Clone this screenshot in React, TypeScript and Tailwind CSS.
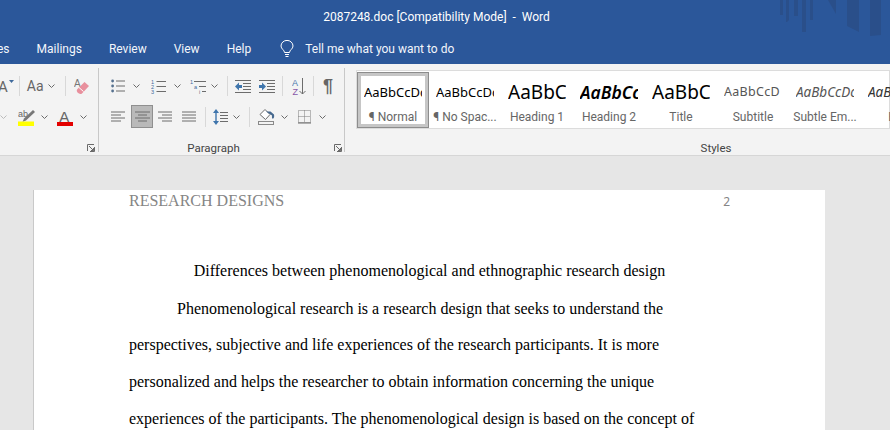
import React from 'react';

const Chevron = ({ className = '' }: { className?: string }) => (
  <svg width="7" height="4" viewBox="0 0 7 4" className={className} fill="none" stroke="#6a6a6a">
    <polyline points="0.5,0.5 3.5,3.5 6.5,0.5" />
  </svg>
);

const Separator = ({ className = '' }: { className?: string }) => (
  <div className={`w-px h-[20px] bg-[#d8d8d8] ${className}`} />
);

const Launcher = ({ className = '' }: { className?: string }) => (
  <svg width="8" height="8" viewBox="0 0 8 8" className={`absolute bottom-0 ${className}`} fill="none" stroke="#6a6a6a">
    <path d="M7.5 3V7.5H3M0.5 7V0.5H7M2 2L6.5 6.5M6.5 4V6.5H4" />
  </svg>
);

const AlignIcon = ({ lines }: { lines: number[][] }) => (
  <svg width="15" height="11" viewBox="0 0 15 11" stroke="#6c6c6c">
    {lines.map((l, i) => (
      <line key={i} x1={l[0]} x2={l[1]} y1={i * 3 + 1} y2={i * 3 + 1} />
    ))}
  </svg>
);

const BulletsIcon = () => (
  <svg width="14" height="14" viewBox="0 0 14 14">
    <circle cx="1.6" cy="2" r="1.4" fill="#56718f" />
    <circle cx="1.6" cy="7" r="1.4" fill="#56718f" />
    <circle cx="1.6" cy="12" r="1.4" fill="#56718f" />
    <path d="M5 2H14M5 7H14M5 12H14" stroke="#6c6c6c" />
  </svg>
);

const NumberedIcon = () => (
  <svg width="15" height="15" viewBox="0 0 15 15" fontFamily="Liberation Sans, sans-serif" fontSize="5.5" fill="#3f6a9c">
    <text x="0" y="5">1</text>
    <text x="0" y="10">2</text>
    <text x="0" y="15">3</text>
    <path d="M5.5 2.5H15M5.5 7.5H15M5.5 12.5H15" stroke="#6c6c6c" />
  </svg>
);

const MultilevelIcon = () => (
  <svg width="17" height="15" viewBox="0 0 17 15" fontFamily="Liberation Sans, sans-serif" fontSize="5.5" fill="#3f6a9c">
    <text x="0" y="5">1</text>
    <text x="4" y="10">a</text>
    <text x="9" y="15" fill="#6c6c6c">i</text>
    <path d="M4 2.5H16M9 7.5H16M12 12.5H16" stroke="#6c6c6c" />
  </svg>
);

const IndentIcon = ({ flip = false }: { flip?: boolean }) => (
  <svg width="16" height="13" viewBox="0 0 16 13">
    <path d="M0 0.5H16M8 3.5H16M8 6.5H16M8 9.5H16M0 12.5H16" stroke="#6c6c6c" />
    {flip ? (
      <path d="M0 5H3V2.5L7 6.5L3 10.5V8H0Z" fill="#3f75ac" />
    ) : (
      <path d="M7 5H4V2.5L0 6.5L4 10.5V8H7Z" fill="#3f75ac" />
    )}
  </svg>
);

const SortIcon = () => (
  <svg width="14" height="17" viewBox="0 0 14 17" fontFamily="Liberation Sans, sans-serif" fontSize="9">
    <text x="0" y="7.5" fill="#4a78ad">A</text>
    <text x="0.5" y="16.5" fill="#8758a8">Z</text>
    <path d="M10.5 0V16M7.5 13L10.5 16L13.5 13" stroke="#6c6c6c" fill="none" />
  </svg>
);

const LineSpacingIcon = () => (
  <svg width="15" height="16" viewBox="0 0 15 16">
    <path d="M3 2V14" stroke="#3f75ac" strokeWidth="1.4" />
    <path d="M3 0L6 4H0ZM3 16L0 12H6Z" fill="#3f75ac" />
    <path d="M7 3.5H15M7 6.5H15M7 9.5H15M7 12.5H15" stroke="#6c6c6c" />
  </svg>
);

const ShadingIcon = () => (
  <svg width="17" height="16" viewBox="0 0 17 16" fill="none">
    <path d="M7 0.5L2 5.5L7.5 10.5L12 5.5Z" stroke="#6c6c6c" fill="#fff" />
    <path d="M8 2.5H12.5L16 5.5C16.5 7.5 16 9.5 14.8 9.8C13.6 9.5 14 7.5 14 6.5L11 4.5Z" fill="#46698f" />
    <rect x="0.5" y="12.5" width="15" height="3" stroke="#8a8a8a" fill="#f3f3f3" />
  </svg>
);

const BordersIcon = () => (
  <svg width="13" height="14" viewBox="0 0 13 14" fill="none">
    <path d="M0.5 0.5H12.5V12.5H0.5ZM6.5 0.5V12.5M0.5 6.5H12.5" stroke="#7a7a7a" strokeDasharray="1 1" />
    <path d="M0 13H13" stroke="#6a6a6a" />
  </svg>
);

const EraserIcon = () => (
  <svg width="15" height="17" viewBox="0 0 15 17" fontFamily="Liberation Sans, sans-serif">
    <text x="0" y="9" fontSize="10" fill="#777">A</text>
    <path d="M10.5 4L15 8L8 15.5C6.5 16.5 5 16 3.5 14.5C2.5 13 2.5 12 3.5 11Z" fill="#e8909d" />
    <path d="M5 9.5L9.5 13.5" stroke="#fff" />
  </svg>
);

const HighlightIcon = () => (
  <svg width="17" height="17" viewBox="0 0 17 17" fontFamily="Liberation Sans, sans-serif">
    <text x="0" y="8" fontSize="9" fill="#666">ab</text>
    <path d="M15 1L17 3L8 11.5L4.5 13L6 9.5Z" fill="#777" />
    <rect x="0" y="12.5" width="16" height="4.5" fill="#ffff00" />
  </svg>
);

const FontColorIcon = () => (
  <svg width="16" height="17" viewBox="0 0 16 17" fontFamily="Liberation Sans, sans-serif">
    <text x="2.2" y="12.5" fontSize="15" fill="#666">A</text>
    <rect x="0" y="13" width="16" height="4" fill="#e30000" />
  </svg>
);

const LightBulb = () => (
  <svg width="14" height="18" viewBox="0 0 14 18" fill="none" stroke="#fff" strokeWidth="1">
    <path d="M4.5 12.5C4.5 10 1 9 1 6A6 5.6 0 0 1 13 6C13 9 9.5 10 9.5 12.5Z" />
    <path d="M5 14.5H9M5.5 16.5H8.5" />
  </svg>
);

const TitleArt = () => (
  <svg width="110" height="40" viewBox="0 0 110 40" fill="#2a4f8a" className="absolute right-0 top-0">
    <path d="M0 0H3V15H0ZM6 0H9V20L7 22H6ZM14 0H18V16H14ZM22 0H26V32H22ZM30 0H33V20H30ZM48 0L56 0L56 14ZM67 0H79V32L67 26ZM90 0H101V35L90 36Z" />
  </svg>
);

const styles = [
  { sample: 'AaBbCcDc', label: '¶ Normal', cls: 'text-[13px] text-black', selected: true },
  { sample: 'AaBbCcDc', label: '¶ No Spac...', cls: 'text-[13px] text-black' },
  { sample: 'AaBbC', label: 'Heading 1', cls: 'text-[19px] text-black' },
  { sample: 'AaBbCc', label: 'Heading 2', cls: 'text-[17.5px] italic font-semibold text-black' },
  { sample: 'AaBbC', label: 'Title', cls: 'text-[19px] text-black' },
  { sample: 'AaBbCcD', label: 'Subtitle', cls: 'text-[12.5px] tracking-[0.3px] text-[#555]' },
  { sample: 'AaBbCcDc', label: 'Subtle Em...', cls: 'text-[13.5px] italic text-[#555]' },
  { sample: 'AaBbCcDc', label: 'Em', cls: 'text-[13.5px] italic text-[#333]' },
];

const tabs = ['es', 'Mailings', 'Review', 'View', 'Help'];

const bodyLines = [
  'perspectives, subjective and life experiences of the research participants. It is more',
  'personalized and helps the researcher to obtain information concerning the unique',
  'experiences of the participants. The phenomenological design is based on the concept of',
];

export default function App() {
  return (
    <div className="h-[430px] w-[890px] overflow-hidden flex flex-col bg-[#e6e6e6] font-['Roboto',sans-serif]">
      <header className="relative h-[64px] shrink-0 bg-[#2b579a] text-white overflow-hidden">
        <TitleArt />
        <div className="h-[33px] flex items-center justify-center text-[12px] whitespace-pre">
          <span className="ml-[-17px]">2087248.doc [Compatibility Mode]  -  Word</span>
        </div>
        <nav className="h-[31px] flex items-center text-[12px] text-[#f3f6fb]">
          <div className="flex gap-[27px] ml-[-3px]">
            {tabs.map((t) => (
              <span key={t}>{t}</span>
            ))}
          </div>
          <div className="ml-[29px]"><LightBulb /></div>
          <span className="ml-[11px]">Tell me what you want to do</span>
        </nav>
      </header>

      <section className="h-[92px] shrink-0 flex bg-[#f3f3f3] border-b border-[#d6d6d6] text-[#444] overflow-hidden">
        <div className="relative w-[99px] shrink-0 border-r border-[#c8c8c8] mt-[4px] mb-[3px]">
          <div className="h-[20px] mt-[8px] flex items-center">
            <span className="ml-[-2px] text-[15px] leading-none text-[#666] mt-[3px]">A</span>
            <svg width="5" height="3" viewBox="0 0 5 3" className="ml-[1px] mb-[9px]"><path d="M0 0H5L2.5 3Z" fill="#3f6a9c" /></svg>
            <Separator className="ml-[5px]" />
            <span className="ml-[7px] text-[14px] leading-none text-[#666]">Aa</span>
            <Chevron className="ml-[4px]" />
            <Separator className="ml-[10px]" />
            <div className="ml-[8px]"><EraserIcon /></div>
          </div>
          <div className="h-[20px] mt-[11px] flex items-center">
            <Chevron className="ml-0 opacity-40" />
            <div className="ml-[11px]"><HighlightIcon /></div>
            <Chevron className="ml-[6px]" />
            <div className="ml-[9px]"><FontColorIcon /></div>
            <Chevron className="ml-[7px]" />
          </div>
          <Launcher className="right-[3px]" />
        </div>

        <div className="relative w-[246px] shrink-0 border-r border-[#c8c8c8] mt-[4px] mb-[3px] flex flex-col">
          <div className="h-[20px] mt-[8px] flex items-center pl-[12px]">
            <BulletsIcon />
            <Chevron className="ml-[8px]" />
            <div className="ml-[11px]"><NumberedIcon /></div>
            <Chevron className="ml-[8px]" />
            <div className="ml-[9px]"><MultilevelIcon /></div>
            <Chevron className="ml-[4px]" />
            <Separator className="ml-[9px]" />
            <div className="ml-[7px]"><IndentIcon /></div>
            <div className="ml-[8px]"><IndentIcon flip /></div>
            <Separator className="ml-[7px]" />
            <div className="ml-[9px]"><SortIcon /></div>
            <Separator className="ml-[7px]" />
            <span className="ml-[9px] text-[18px] font-bold leading-none text-[#666] font-['Liberation_Sans',sans-serif]">¶</span>
          </div>
          <div className="h-[23px] mt-[9px] flex items-center pl-[12px]">
            <AlignIcon lines={[[0, 14], [0, 10], [0, 14], [0, 10]]} />
            <div className="ml-[5px] w-[22px] h-[23px] flex items-center justify-center bg-[#b9b9b9] border border-[#8f8f8f]">
              <AlignIcon lines={[[0, 15], [3, 12], [0, 15], [3, 12]]} />
            </div>
            <div className="ml-[5px]"><AlignIcon lines={[[0, 14], [4, 14], [0, 14], [4, 14]]} /></div>
            <div className="ml-[9px]"><AlignIcon lines={[[0, 14], [0, 14], [0, 14], [0, 14]]} /></div>
            <Separator className="ml-[8px]" />
            <div className="ml-[7px]"><LineSpacingIcon /></div>
            <Chevron className="ml-[5px]" />
            <Separator className="ml-[9px]" />
            <div className="ml-[8px]"><ShadingIcon /></div>
            <Chevron className="ml-[6px]" />
            <div className="ml-[10px]"><BordersIcon /></div>
            <Chevron className="ml-[8px]" />
          </div>
          <div className="mt-auto -mb-[4px] h-[15px] pr-[16px] text-center text-[11.5px] leading-[15px] text-[#444]">Paragraph</div>
          <Launcher className="right-[2px]" />
        </div>

        <div className="flex-1 min-w-0 flex flex-col pl-[11px]">
          <div className="h-[59px] mt-[6px] flex bg-white border border-[#dcdcdc] pt-px pb-px">
            {styles.map((s) => (
              <div
                key={s.label}
                className={`w-[72px] h-[56px] shrink-0 overflow-hidden border ${
                  s.selected ? 'border-[#8d8d8d] shadow-[inset_0_0_0_3px_#c6c6c6]' : 'border-transparent'
                }`}
              >
                <div className="h-[39px] w-[58px] ml-[6px] flex items-center overflow-hidden font-['Noto_Sans',sans-serif] whitespace-nowrap">
                  <span className={s.cls}>{s.sample}</span>
                </div>
                <div className="-mt-[2px] text-center text-[12px] leading-[15px] text-[#666] whitespace-nowrap">{s.label}</div>
              </div>
            ))}
          </div>
          <div className="text-center text-[11.5px] leading-[15px] mt-[12px] text-[#444] w-[720px]">Styles</div>
        </div>
      </section>

      <main className="flex-1 min-h-0 pl-[33px] pt-[34px]">
        <article className="w-[792px] h-[300px] bg-white border-l border-[#c9c9c9] pl-[95px] pr-[95px] font-['Liberation_Serif',serif] text-[16px] text-black">
          <div className="flex justify-between items-center h-[22px] text-[#858585]">
            <span>RESEARCH DESIGNS</span>
            <span className="text-[12px] font-['Noto_Sans',sans-serif] mt-[2px]">2</span>
          </div>
          <p className="mt-[48px] text-center leading-[22px]">Differences between phenomenological and ethnographic research design</p>
          <p className="mt-[15.5px] pl-[48px] leading-[22px] whitespace-nowrap">Phenomenological research is a research design that seeks to understand the</p>
          {bodyLines.map((l) => (
            <p key={l} className="mt-[14.7px] leading-[22px] whitespace-nowrap">{l}</p>
          ))}
        </article>
      </main>
    </div>
  );
}
